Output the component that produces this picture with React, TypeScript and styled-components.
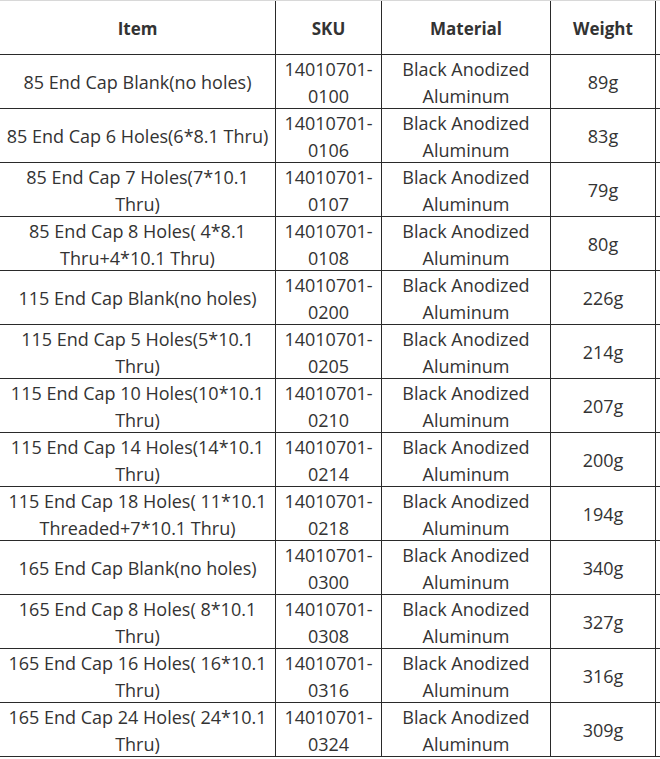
import React from 'react';
import styled, { createGlobalStyle } from 'styled-components';

const Global = createGlobalStyle`
    html, body {
        margin: 0;
        padding: 0;
        background: #fff;
        overflow: hidden;
    }
`;

type Part = {
    item: string;
    sku: string;
    weight: string;
};

const parts: Part[] = [
    { item: '85 End Cap Blank(no holes)', sku: '0100', weight: '89g' },
    { item: '85 End Cap 6 Holes(6*8.1 Thru)', sku: '0106', weight: '83g' },
    { item: '85 End Cap 7 Holes(7*10.1\nThru)', sku: '0107', weight: '79g' },
    { item: '85 End Cap 8 Holes( 4*8.1\nThru+4*10.1 Thru)', sku: '0108', weight: '80g' },
    { item: '115 End Cap Blank(no holes)', sku: '0200', weight: '226g' },
    { item: '115 End Cap 5 Holes(5*10.1\nThru)', sku: '0205', weight: '214g' },
    { item: '115 End Cap 10 Holes(10*10.1\nThru)', sku: '0210', weight: '207g' },
    { item: '115 End Cap 14 Holes(14*10.1\nThru)', sku: '0214', weight: '200g' },
    { item: '115 End Cap 18 Holes( 11*10.1\nThreaded+7*10.1 Thru)', sku: '0218', weight: '194g' },
    { item: '165 End Cap Blank(no holes)', sku: '0300', weight: '340g' },
    { item: '165 End Cap 8 Holes( 8*10.1\nThru)', sku: '0308', weight: '327g' },
    { item: '165 End Cap 16 Holes( 16*10.1\nThru)', sku: '0316', weight: '316g' },
    { item: '165 End Cap 24 Holes( 24*10.1\nThru)', sku: '0324', weight: '309g' },
];

const App = () => {
    return (
        <>
            <Global />
            <Table_Wrapper>
                <Row>
                    <Head_Cell>Item</Head_Cell>
                    <Head_Cell>SKU</Head_Cell>
                    <Head_Cell>Material</Head_Cell>
                    <Head_Cell>Weight</Head_Cell>
                    <Head_Cell></Head_Cell>
                </Row>
                {parts.map((p) => (
                    <Row key={p.sku}>
                        <Cell>{p.item}</Cell>
                        <Cell>{'14010701-\n' + p.sku}</Cell>
                        <Cell>{'Black Anodized\nAluminum'}</Cell>
                        <Cell>{p.weight}</Cell>
                        <Cell></Cell>
                    </Row>
                ))}
            </Table_Wrapper>
        </>
    );
};

export default App;

const Table_Wrapper = styled.div`
    width: 660px;
    border-top: 1px solid #d8d8d8;
    font-family: 'Open Sans', 'Noto Sans', sans-serif;
    color: #333;
`;

const Row = styled.div`
    display: grid;
    grid-template-columns: 276px 106px 169px 105px 4px;
    height: 54px;
    border-bottom: 1px solid #2a2a2a;
    box-sizing: border-box;
`;

const Cell = styled.div`
    display: flex;
    align-items: center;
    justify-content: center;
    text-align: center;
    white-space: pre-line;
    font-size: 18px;
    line-height: 27px;
    border-right: 1px solid #2a2a2a;
    padding: 2px 1px 0;
    overflow: hidden;
    &:last-child {
        border-right: none;
    }
`;

const Head_Cell = styled(Cell)`
    font-size: 17px;
    font-weight: 700;
`;
